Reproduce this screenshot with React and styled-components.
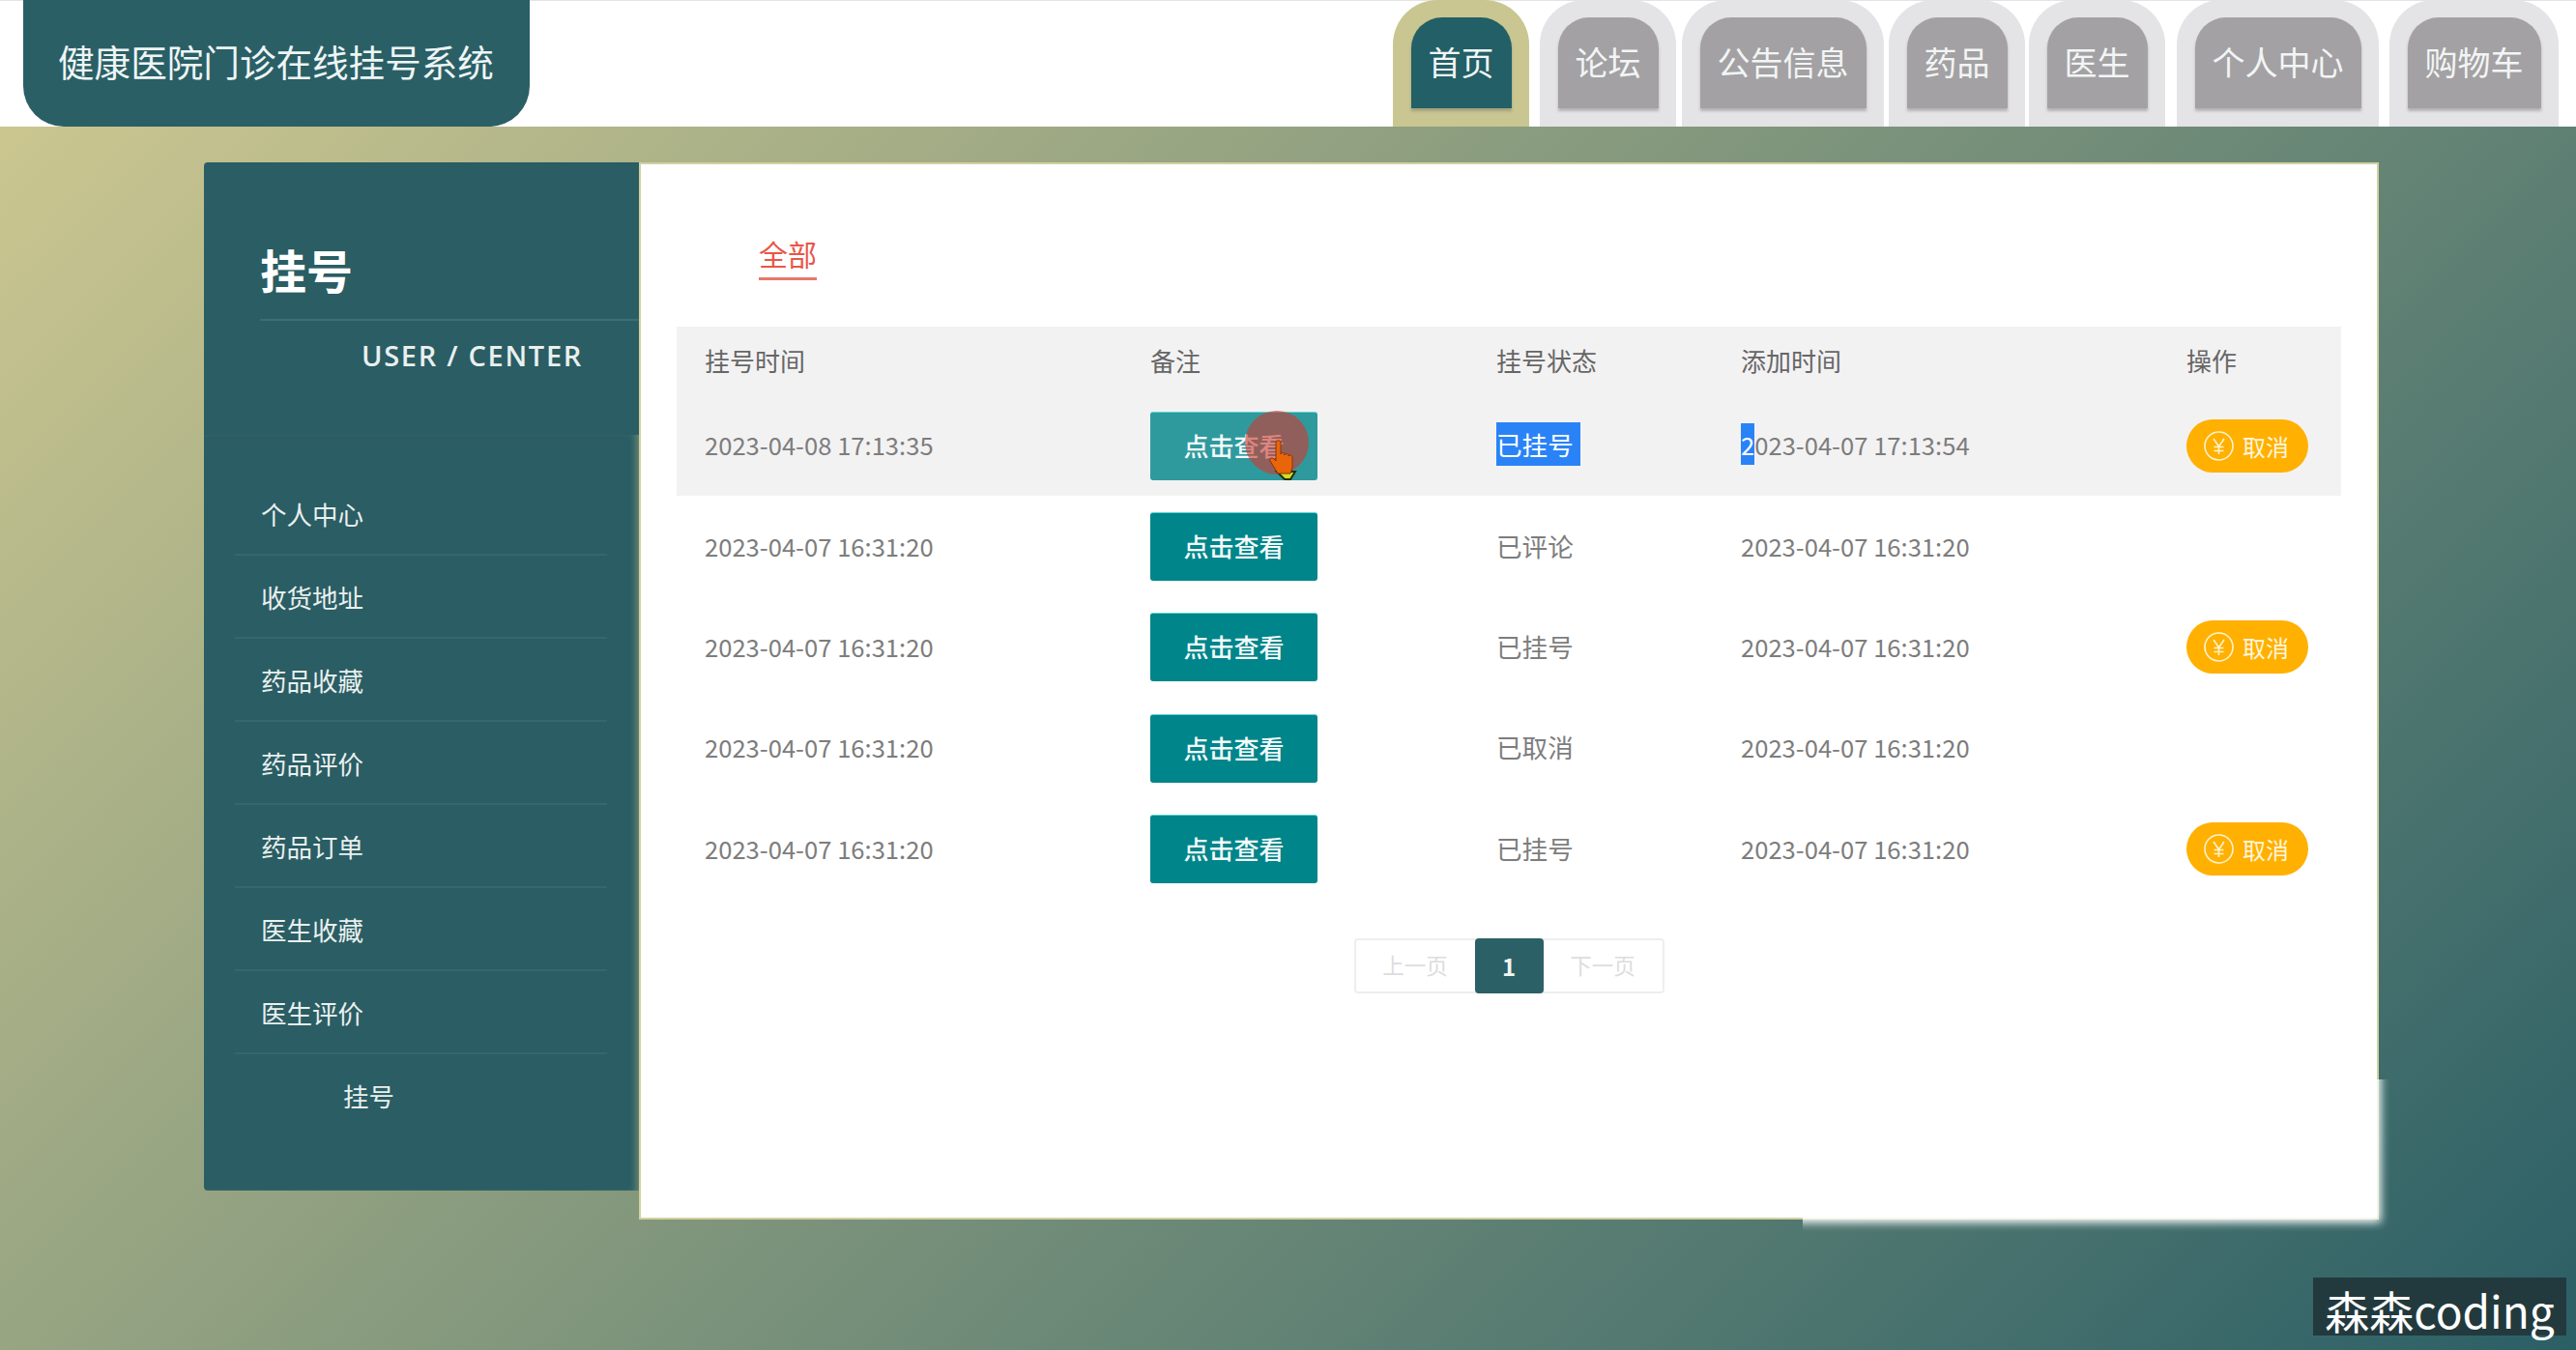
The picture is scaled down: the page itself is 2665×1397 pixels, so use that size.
import React from "react";
import styled, { createGlobalStyle } from "styled-components";

const GlobalStyle = createGlobalStyle`
  html, body {
    margin: 0;
    padding: 0;
    background: #fff;
    font-family: "Noto Sans CJK SC", "Noto Sans", sans-serif;
  }
`;

const Page = styled.div`
  position: relative;
  width: 2665px;
  height: 1397px;
  overflow: hidden;
`;

const Header = styled.header`
  height: 131px;
  background: #fff;
  border-top: 1px solid #e4e2e4;
  box-sizing: border-box;
  padding: 0 18px 0 24px;
  display: flex;
  justify-content: space-between;
`;

const Logo = styled.div`
  width: 524px;
  height: 131px;
  margin-top: -1px;
  box-sizing: border-box;
  padding: 40px 0 0 36px;
  background: #2a5f66;
  border-radius: 0 0 42px 42px;
  color: #eef5f5;
  font-size: 37.6px;
  line-height: 46px;
  white-space: nowrap;
`;

const Nav = styled.nav`
  display: flex;
`;

const NavTab = styled.div`
  height: 131px;
  margin-top: -1px;
  margin-left: ${(p) => p.$gap}px;
  box-sizing: border-box;
  padding: 18px 18.5px 0;
  background: ${(p) => (p.$active ? "#c9c691" : "#e4e3e5")};
  border-radius: 46px 46px 0 0;
`;

const NavLabel = styled.div`
  height: 94px;
  box-sizing: border-box;
  padding: 0 18px 4px;
  display: flex;
  align-items: center;
  background: ${(p) => (p.$active ? "#225f66" : "#a3a1a3")};
  border-radius: 32px 32px 0 0;
  box-shadow: 0 3px 3px rgba(90, 90, 90, 0.35);
  color: #f2f5f5;
  font-size: 34px;
`;

const Body = styled.div`
  height: 1266px;
  box-sizing: border-box;
  padding: 37px 0 0 211px;
  display: flex;
  align-items: flex-start;
  background: linear-gradient(135deg, #cbc690 0%, #2b5f66 100%);
`;

const Sidebar = styled.aside`
  width: 450px;
  height: 1064px;
  background: #2a5d64;
  border-radius: 4px 0 0 4px;
  color: #e9f0ee;
`;

const SideHead = styled.div`
  height: 282px;
  box-sizing: border-box;
  padding: 78px 0 0 58px;
`;

const SideTitle = styled.div`
  font-size: 48px;
  line-height: 64px;
  font-weight: 700;
  color: #fff;
  padding-bottom: 20px;
  border-bottom: 2px solid #3a6f74;
`;

const SideSub = styled.div`
  margin-top: 16px;
  padding-right: 58px;
  text-align: right;
  font-family: "Open Sans", "Noto Sans", sans-serif;
  font-size: 29px;
  font-weight: 600;
  line-height: 40px;
  letter-spacing: 1.7px;
`;

const SideMenu = styled.ul`
  list-style: none;
  height: 782px;
  margin: 0;
  box-sizing: border-box;
  padding: 39px 33px 0 32px;
  box-shadow: inset -7px 0 7px -4px rgba(190, 190, 140, 0.45);
`;

const SideItem = styled.li`
  height: 86px;
  box-sizing: border-box;
  padding-left: ${(p) => (p.$current ? "112px" : "27px")};
  border-bottom: 2px solid ${(p) => (p.$current ? "transparent" : "#32686e")};
  font-size: 26.5px;
  line-height: 86px;
`;

const Main = styled.main`
  width: 1800px;
  height: 1094px;
  box-sizing: border-box;
  padding: 72px 39px 0;
  background: #fff;
  box-shadow: inset 0 0 0 2px #d3cf9f;
`;

const TabRow = styled.div`
  display: flex;
  padding-left: 85px;
  margin-bottom: 48px;
`;

const Tab = styled.div`
  height: 50px;
  box-sizing: border-box;
  border-bottom: 3px solid #e8776c;
  color: #e8564a;
  font-size: 30px;
  line-height: 44px;
`;

const Table = styled.table`
  width: 1722px;
  table-layout: fixed;
  border-collapse: collapse;
`;

const HeadRow = styled.tr`
  height: 71px;
  background: #f3f2f3;
`;

const Row = styled.tr`
  height: 104.4px;
  background: ${(p) => (p.$hover ? "#f3f2f3" : "#fff")};
`;

const Th = styled.th`
  box-sizing: border-box;
  width: ${(p) => p.$width};
  padding: 0 0 2px 29px;
  text-align: left;
  font-size: 26px;
  font-weight: 400;
  color: #666;
`;

const Td = styled.td`
  padding: 0 0 ${(p) => (p.$flush ? "0" : "3px")} 29px;
  font-size: 25.6px;
  color: #7d7d7d;
  white-space: nowrap;
`;

const StatusText = styled.span`
  font-size: 26.6px;
`;

const Selected = styled.span`
  background: #2a83f6;
  color: #fff;
  padding: 3px ${(p) => (p.$wide ? "7px" : "0")} 3px 0;
`;

const ViewButton = styled.div`
  position: relative;
  width: 173px;
  height: 71px;
  padding-bottom: 3px;
  display: flex;
  align-items: center;
  justify-content: center;
  background: ${(p) => (p.$hover ? "#2f9a9e" : "#00858a")};
  border-top: 1px solid #5fd6d6;
  box-sizing: border-box;
  border-radius: 3px;
  color: #f4fbfb;
  font-size: 26px;
  font-weight: 500;
`;

const ClickSpot = styled.div`
  position: absolute;
  left: 98px;
  top: -2px;
  width: 66px;
  height: 66px;
  border-radius: 50%;
  background: rgba(205, 60, 50, 0.62);
`;

const HandCursor = styled.svg`
  position: absolute;
  left: 122px;
  top: 28px;
`;

const CancelButton = styled.div`
  width: 126px;
  height: 55px;
  box-sizing: border-box;
  padding-left: 18px;
  display: flex;
  align-items: center;
  gap: 9px;
  background: #ffb000;
  border-radius: 28px;
  color: #fff6dd;
  font-size: 24px;
`;

const Pager = styled.div`
  width: 321px;
  height: 57px;
  margin: 40px auto 0;
  box-sizing: border-box;
  display: flex;
  align-items: center;
  border: 2px solid #efedf0;
  border-radius: 4px;
`;

const PagerText = styled.div`
  flex: 1;
  text-align: center;
  color: #dddcde;
  font-size: 22.5px;
  padding-bottom: 2px;
`;

const PagerCurrent = styled.div`
  width: 71px;
  height: 57px;
  margin: -2px 0;
  display: flex;
  align-items: center;
  justify-content: center;
  background: #2b6166;
  border-radius: 4px;
  color: #f0f6f2;
  font-size: 24px;
  font-weight: 700;
`;

const BlurClip = styled.div`
  position: absolute;
  left: 1865px;
  top: 1117px;
  width: 640px;
  height: 190px;
  overflow: hidden;
`;

const BlurPatch = styled.div`
  position: absolute;
  left: -30px;
  top: -30px;
  width: 628px;
  height: 178px;
  background: #fff;
  filter: blur(5px);
`;

const Watermark = styled.div`
  position: absolute;
  left: 2393px;
  top: 1322px;
  width: 262px;
  height: 60px;
  background: #223a3e;
  color: #fff;
  font-size: 46px;
  line-height: 66px;
  text-align: center;
  white-space: nowrap;
`;

const navItems = [
  { label: "首页", gap: 0 },
  { label: "论坛", gap: 11 },
  { label: "公告信息", gap: 6 },
  { label: "药品", gap: 5 },
  { label: "医生", gap: 4 },
  { label: "个人中心", gap: 12 },
  { label: "购物车", gap: 11 },
];
const menuItems = ["个人中心", "收货地址", "药品收藏", "药品评价", "药品订单", "医生收藏", "医生评价"];

const rows = [
  { time: "2023-04-08 17:13:35", status: "已挂号", added: "2023-04-07 17:13:54", cancel: true, hover: true },
  { time: "2023-04-07 16:31:20", status: "已评论", added: "2023-04-07 16:31:20" },
  { time: "2023-04-07 16:31:20", status: "已挂号", added: "2023-04-07 16:31:20", cancel: true },
  { time: "2023-04-07 16:31:20", status: "已取消", added: "2023-04-07 16:31:20" },
  { time: "2023-04-07 16:31:20", status: "已挂号", added: "2023-04-07 16:31:20", cancel: true },
];

function YenIcon() {
  return (
    <svg width="31" height="31" viewBox="0 0 31 31" fill="none" stroke="#fff3cf" strokeWidth="1.6">
      <circle cx="15.5" cy="15.5" r="14.5" />
      <path d="M10 8l5.5 8 5.5-8M15.5 16v8M10.5 16.5h10M10.5 20.5h10" />
    </svg>
  );
}

function Hand() {
  return (
    <HandCursor width="32" height="42" viewBox="0 0 32 42">
      <path d="M9 33l8 8h6l5-8z" fill="#cfe020" stroke="#26300c" strokeWidth="2" />
      <path
        d="M8 3c0-3 5-3 5 0v12c0-2 4-2 4 0v1c0-2 4-2 4 0v1c0-2 4-1 4 1v11l-2 6H10L2 22c-1-3 2-4 4-2l2 2z"
        fill="#e8650a"
        stroke="#8a3208"
        strokeWidth="1"
      />
    </HandCursor>
  );
}

export default function App() {
  return (
    <Page>
      <GlobalStyle />
      <Header>
        <Logo>健康医院门诊在线挂号系统</Logo>
        <Nav>
          {navItems.map((item, i) => (
            <NavTab key={item.label} $active={i === 0} $gap={item.gap}>
              <NavLabel $active={i === 0}>{item.label}</NavLabel>
            </NavTab>
          ))}
        </Nav>
      </Header>
      <Body>
        <Sidebar>
          <SideHead>
            <SideTitle>挂号</SideTitle>
            <SideSub>USER / CENTER</SideSub>
          </SideHead>
          <SideMenu>
            {menuItems.map((item) => (
              <SideItem key={item}>{item}</SideItem>
            ))}
            <SideItem $current>挂号</SideItem>
          </SideMenu>
        </Sidebar>
        <Main>
          <TabRow>
            <Tab>全部</Tab>
          </TabRow>
          <Table>
            <thead>
              <HeadRow>
                <Th $width="461px">挂号时间</Th>
                <Th $width="358px">备注</Th>
                <Th $width="253px">挂号状态</Th>
                <Th $width="461px">添加时间</Th>
                <Th $width="189px">操作</Th>
              </HeadRow>
            </thead>
            <tbody>
              {rows.map((row, i) => (
                <Row key={i} $hover={row.hover}>
                  <Td>{row.time}</Td>
                  <Td $flush>
                    <ViewButton $hover={row.hover}>
                      点击查看
                      {row.hover && <ClickSpot />}
                      {row.hover && <Hand />}
                    </ViewButton>
                  </Td>
                  <Td>
                    <StatusText>
                      {row.hover ? <Selected $wide>{row.status}</Selected> : row.status}
                    </StatusText>
                  </Td>
                  <Td>
                    {row.hover ? (
                      <>
                        <Selected>{row.added[0]}</Selected>
                        {row.added.slice(1)}
                      </>
                    ) : (
                      row.added
                    )}
                  </Td>
                  <Td $flush>
                    {row.cancel && (
                      <CancelButton>
                        <YenIcon />
                        取消
                      </CancelButton>
                    )}
                  </Td>
                </Row>
              ))}
            </tbody>
          </Table>
          <Pager>
            <PagerText>上一页</PagerText>
            <PagerCurrent>1</PagerCurrent>
            <PagerText>下一页</PagerText>
          </Pager>
        </Main>
      </Body>
      <BlurClip>
        <BlurPatch />
      </BlurClip>
      <Watermark>森森coding</Watermark>
    </Page>
  );
}
